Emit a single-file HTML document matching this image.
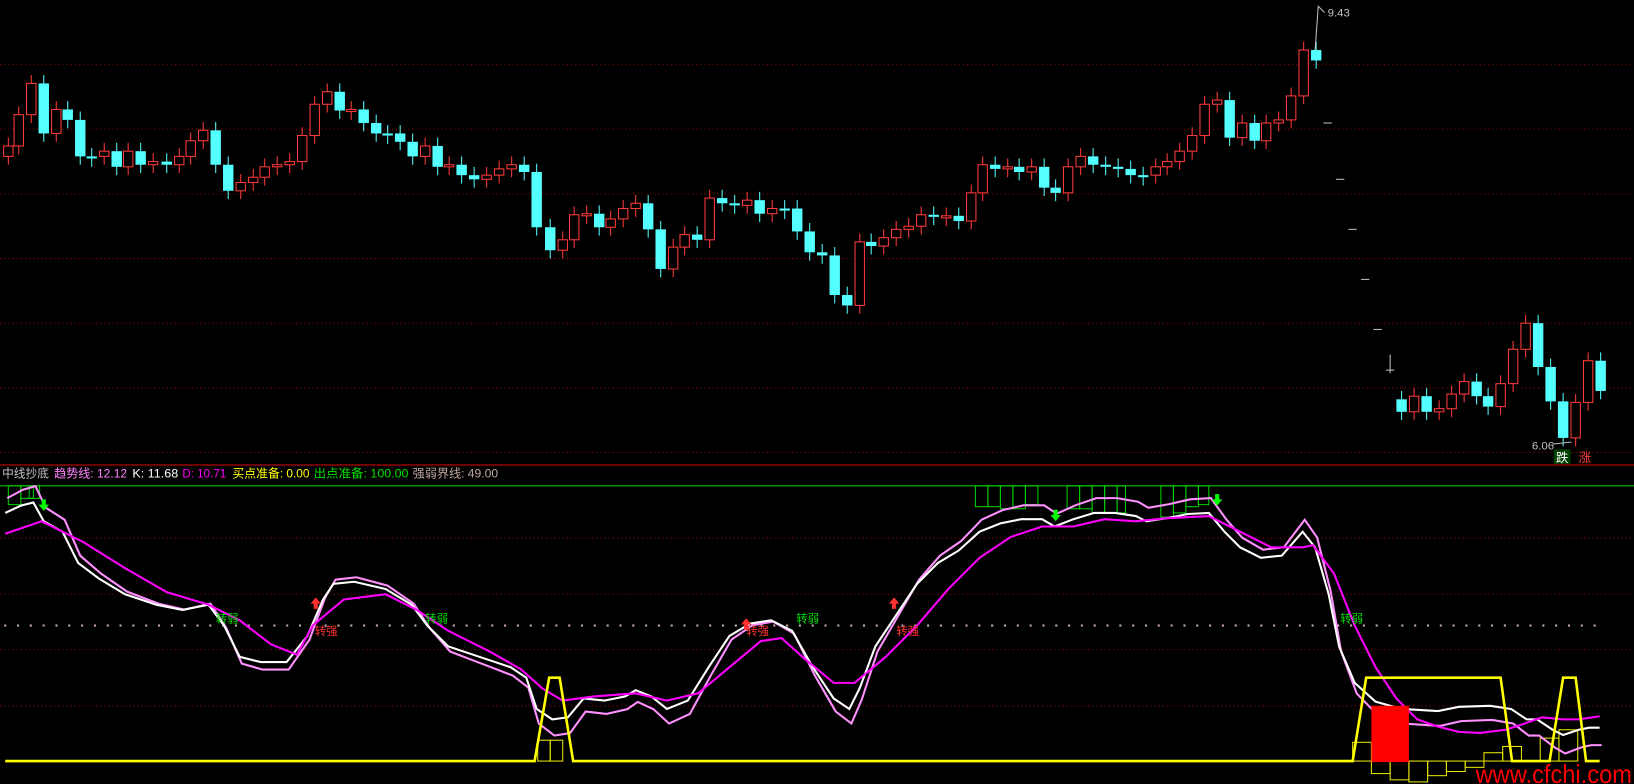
<!DOCTYPE html>
<html><head><meta charset="utf-8"><style>
html,body{margin:0;padding:0;background:#000;overflow:hidden}
svg{display:block}
text{font-family:"Liberation Sans","Noto Sans CJK SC",sans-serif}
</style></head><body>
<svg id="s" width="1634" height="784" viewBox="0 0 1568 752" preserveAspectRatio="none" xmlns="http://www.w3.org/2000/svg">
<rect width="1568" height="752" fill="#000"/>
<g id="grid" stroke="#a00000" stroke-width="1" stroke-dasharray="1,3"></g>
<line x1="0" y1="446" x2="1568" y2="446" stroke="#b00000" stroke-width="1.2"/>
<line x1="0" y1="466" x2="1568" y2="466" stroke="#00c000" stroke-width="1"/>
<g id="plus" fill="#c8a8a8" font-size="10"></g>
<g id="candles"></g>
<g id="lower"></g>
<text x="2" y="458" font-size="11.5" fill="#c0c0c0" textLength="45" lengthAdjust="spacingAndGlyphs">中线抄底</text>
<text x="52" y="458" font-size="11.5" fill="#ff80ff" textLength="70" lengthAdjust="spacingAndGlyphs">趋势线: 12.12</text>
<text x="127" y="458" font-size="11.5" fill="#ffffff" textLength="44" lengthAdjust="spacingAndGlyphs">K: 11.68</text>
<text x="175" y="458" font-size="11.5" fill="#ff00ff" textLength="42" lengthAdjust="spacingAndGlyphs">D: 10.71</text>
<text x="223" y="458" font-size="11.5" fill="#ffff00" textLength="74" lengthAdjust="spacingAndGlyphs">买点准备: 0.00</text>
<text x="301" y="458" font-size="11.5" fill="#00e000" textLength="91" lengthAdjust="spacingAndGlyphs">出点准备: 100.00</text>
<text x="396" y="458" font-size="11.5" fill="#c0a8a0" textLength="82" lengthAdjust="spacingAndGlyphs">强弱界线: 49.00</text>
<polyline points="1262,48 1265,6 1271,12" fill="none" stroke="#c0c0c0"/>
<text x="1274" y="16" font-size="11" fill="#c0c0c0">9.43</text>
<text x="1470" y="431" font-size="11" fill="#c0c0c0">6.06</text>
<line x1="1490" y1="426" x2="1508" y2="424" stroke="#c0c0c0"/>
<rect x="1491" y="431" width="16" height="14" fill="#004000"/>
<text x="1493" y="443" font-size="12" fill="#ffffff">跌</text>
<text x="1515" y="443" font-size="12" fill="#ff4040">涨</text>
<text x="1416" y="751" font-size="25" fill="#ff0000" textLength="150" lengthAdjust="spacingAndGlyphs">www.cfchi.com</text>
</svg>
<script>
const NS="http://www.w3.org/2000/svg";
function el(p,t,a){const e=document.createElementNS(NS,t);for(const k in a)e.setAttribute(k,a[k]);p.appendChild(e);return e;}
const grid=document.getElementById('grid');
[62,124,186,248,310,372,434,516,570,623,677].forEach(y=>el(grid,'line',{x1:0,y1:y,x2:1568,y2:y}));
const plus=document.getElementById('plus');
for(let x=4;x<1540;x+=12.3){el(plus,'rect',{x:x,y:599,width:2,height:2,fill:'#c8a8a8'});}
const C=[[8,140],[18,110],[30,80],[42,128],[54,105],[65,115],[77,150],[88,150],[100,145],[112,160],[123,145],[135,158],[147,155],[160,158],[172,150],[183,135],[195,125],[207,158],[219,183],[231,175],[243,170],[254,160],[266,158],[278,155],[290,130],[302,100],[314,88],[326,106],[337,105],[349,118],[361,128],[372,128],[384,136],[396,150],[408,140],[420,160],[431,158],[443,168],[455,172],[467,168],[479,162],[491,158],[503,165],[515,218],[528,240],[540,230],[551,206],[563,205],[575,218],[586,210],[598,200],[610,195],[622,220],[634,258],[646,237],[657,225],[669,230],[681,190],[693,195],[705,197],[717,192],[729,205],[741,200],[753,200],[765,222],[777,242],[789,245],[801,283],[813,293],[825,232],[836,236],[848,228],[860,220],[872,217],[884,206],[896,208],[908,207],[920,212],[932,185],[943,158],[955,162],[967,160],[978,165],[990,160],[1002,180],[1013,185],[1025,160],[1037,150],[1049,158],[1061,160],[1073,162],[1085,168],[1097,168],[1109,160],[1120,155],[1132,145],[1144,130],[1156,100],[1168,96],[1180,132],[1192,118],[1204,135],[1215,118],[1227,115],[1239,92],[1251,48],[1263,58]];
const C2=[[1345,395],[1357,380],[1369,395],[1381,392],[1393,378],[1405,366],[1417,380],[1428,390],[1440,368],[1452,335],[1464,310],[1476,352],[1488,385],[1500,420],[1512,386],[1524,346],[1536,375]];
const cg=document.getElementById('candles');
function draw(arr,first){
 for(let i=0;i<arr.length;i++){
  const [x,c]=arr[i];const o=i?arr[i-1][1]:c+(first?10:-12);
  let top=Math.min(o,c),bot=Math.max(o,c);if(bot-top<2){bot=top+2;}
  const up=c<o;const col=up?'#ff3a3a':'#54ffff';
  el(cg,'line',{x1:x,y1:top-8,x2:x,y2:bot+8,stroke:col});
  if(up)el(cg,'rect',{x:x-4.5,y:top,width:9,height:bot-top,fill:'#000',stroke:col});
  else el(cg,'rect',{x:x-5,y:top,width:10,height:bot-top,fill:col});
 }
}
draw(C,true);draw(C2,false);
[[1274,118],[1286,172],[1298,220],[1310,268],[1322,316],[1334,355]].forEach(([x,y])=>el(cg,'line',{x1:x-4,y1:y,x2:x+4,y2:y,stroke:'#c0c0c0'}));
el(cg,'line',{x1:1334,y1:340,x2:1334,y2:358,stroke:'#c0c0c0'});
const L=document.getElementById('lower');
[[8,466,12,18],[20,466,12,12],[28,466,10,12],[936,466,12,20],[948,466,12,20],[960,466,12,22],[972,466,12,22],[984,466,12,18],[1024,466,12,22],[1036,466,12,22],[1048,466,12,26],[1060,466,12,26],[1072,466,8,26],[1114,466,12,30],[1126,466,12,26],[1138,466,12,20],[1150,466,10,18]].forEach(([x,y,w,h])=>el(L,'rect',{x,y,width:w,height:h,fill:'none',stroke:'#00d000'}));
[[1298,712,18,18],[1316,730,18,12],[1334,730,18,18],[1352,730,18,20],[1370,730,18,14],[1388,730,18,10],[1406,730,18,6],[1424,722,18,8],[1442,716,18,14],[1478,708,18,22],[1496,700,18,30],[516,710,12,20],[528,710,12,20]].forEach(([x,y,w,h])=>el(L,'rect',{x,y,width:w,height:h,fill:'none',stroke:'#e8e800'}));
const W=[[5,492],[20,485],[32,482],[42,500],[60,510],[75,540],[95,555],[120,570],[150,580],[175,585],[200,580],[215,600],[230,630],[250,635],[275,635],[295,610],[310,575],[320,560],[340,558],[370,565],[395,580],[410,600],[430,620],[460,630],[490,640],[505,650],[515,680],[530,690],[545,688],[560,670],[580,672],[600,668],[610,662],[625,668],[640,680],[660,672],[680,640],[700,610],[720,598],[740,595],[760,605],[780,640],[800,670],[815,680],[825,660],[840,620],[860,590],[880,560],[900,540],[920,528],[940,510],[960,502],[980,498],[1000,498],[1012,505],[1030,498],[1050,492],[1070,492],[1090,495],[1100,500],[1120,497],[1140,493],[1160,492],[1175,510],[1190,525],[1210,535],[1230,533],[1250,510],[1262,525],[1275,570],[1285,620],[1300,655],[1320,673],[1345,680],[1380,682],[1400,678],[1430,677],[1450,680],[1465,690],[1475,690],[1490,700],[1500,705],[1515,700],[1525,698],[1535,698]];
const D=[[5,512],[40,500],[80,520],[120,545],[160,568],[200,580],[230,595],[260,618],[285,628],[300,600],[330,575],[370,570],[400,585],[430,605],[470,625],[500,642],[520,660],[540,672],[570,668],[610,665],[640,672],[670,665],[700,640],[730,615],[750,612],[770,630],[800,655],[820,655],[850,630],[880,600],[910,565],[940,535],[970,515],[1000,505],[1030,505],[1060,498],[1090,500],[1120,497],[1160,495],[1190,510],[1220,525],[1250,525],[1260,523],[1280,550],[1300,600],[1320,640],[1340,670],[1360,690],[1380,697],[1400,702],[1420,703],[1445,700],[1460,695],[1480,688],[1500,690],[1515,690],[1535,687]];
const pts=a=>a.map(p=>p.join(',')).join(' ');
const P=W.map(([x,y])=>[x+2,Math.min(748,y+(y-600)*0.15+2)]);
el(L,'polyline',{points:pts(P),fill:'none',stroke:'#ff90ff',"stroke-width":2});
el(L,'polyline',{points:pts(W),fill:'none',stroke:'#ffffff',"stroke-width":2});
el(L,'polyline',{points:pts(D),fill:'none',stroke:'#ff00ff',"stroke-width":2});
el(L,'rect',{x:1316,y:677,width:36,height:54,fill:'#ff0000'});
el(L,'polyline',{points:'5,730 513,730 527,650 537,650 550,730 1298,730 1311,650 1440,650 1451,730 1487,730 1500,650 1512,650 1522,730 1535,730',fill:'none',stroke:'#ffff00',"stroke-width":2.5});
function arrow(x,y,down,col){el(L,'polygon',{points:down?`${x-2},${y-6} ${x+2},${y-6} ${x+2},${y-1} ${x+5},${y-1} ${x},${y+5} ${x-5},${y-1} ${x-2},${y-1}`:`${x-2},${y+6} ${x+2},${y+6} ${x+2},${y+1} ${x+5},${y+1} ${x},${y-5} ${x-5},${y+1} ${x-2},${y+1}`,fill:col});}
arrow(42,485,true,'#00ff00');arrow(1013,495,true,'#00ff00');arrow(1168,480,true,'#00ff00');
arrow(303,578,false,'#ff3030');arrow(716,598,false,'#ff3030');arrow(858,578,false,'#ff3030');
[[207,597],[408,597],[764,597],[1286,597]].forEach(([x,y])=>{const t=el(L,'text',{x,y,"font-size":11,fill:'#00e000'});t.textContent='转弱';});
[[302,609],[716,609],[860,609]].forEach(([x,y])=>{const t=el(L,'text',{x,y,"font-size":11,fill:'#ff3030'});t.textContent='转强';});
</script>
</body></html>
